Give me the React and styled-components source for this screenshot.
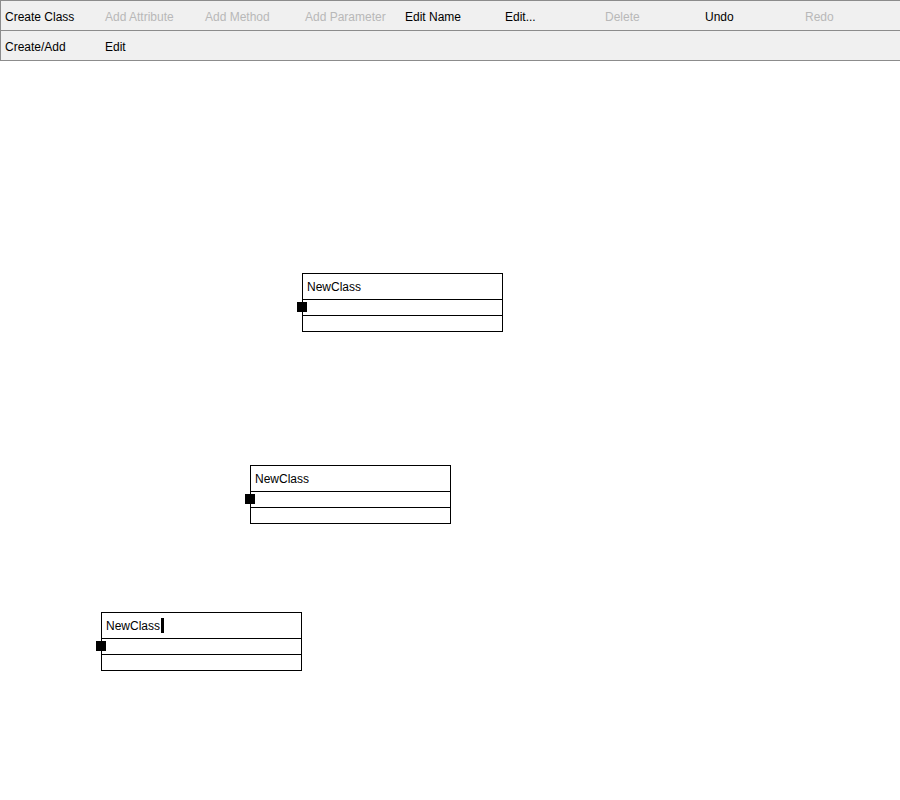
import React from "react";
import styled, { createGlobalStyle } from "styled-components";

const GlobalStyle = createGlobalStyle`
  html, body {
    margin: 0;
    padding: 0;
    background: #ffffff;
  }
  body {
    font-family: "Liberation Sans", Arial, sans-serif;
    font-size: 12px;
  }
`;

const toolbarRows = [
  [
    { label: "Create Class", enabled: true },
    { label: "Add Attribute", enabled: false },
    { label: "Add Method", enabled: false },
    { label: "Add Parameter", enabled: false },
    { label: "Edit Name", enabled: true },
    { label: "Edit...", enabled: true },
    { label: "Delete", enabled: false },
    { label: "Undo", enabled: true },
    { label: "Redo", enabled: false },
  ],
  [
    { label: "Create/Add", enabled: true },
    { label: "Edit", enabled: true },
  ],
];

const classes = [
  { id: 1, name: "NewClass", x: 302, y: 212, editing: false },
  { id: 2, name: "NewClass", x: 250, y: 404, editing: false },
  { id: 3, name: "NewClass", x: 101, y: 551, editing: true },
];

export default function App() {
  return (
    <Page>
      <GlobalStyle />
      <Toolbar>
        {toolbarRows.map((row, i) => (
          <ToolbarRow key={i}>
            {row.map((b) => (
              <ToolButton key={b.label} $disabled={!b.enabled}>
                {b.label}
              </ToolButton>
            ))}
          </ToolbarRow>
        ))}
      </Toolbar>
      <Canvas>
        {classes.map((c) => (
          <ClassBox key={c.id} style={{ left: c.x, top: c.y }}>
            <ClassName>
              {c.name}
              {c.editing && <Caret />}
            </ClassName>
            <Section />
            <Section $last />
            <Handle />
          </ClassBox>
        ))}
      </Canvas>
    </Page>
  );
}

const Page = styled.div`
  width: 900px;
  height: 800px;
  display: flex;
  flex-direction: column;
  background: #ffffff;
`;

const Toolbar = styled.div`
  display: flex;
  flex-direction: column;
  background: #f0f0f0;
  border-top: 1px solid #8c8c8c;
  border-left: 1px solid #8c8c8c;
`;

const ToolbarRow = styled.div`
  display: flex;
  height: 29px;
  border-bottom: 1px solid #8c8c8c;
`;

const ToolButton = styled.div`
  width: 100px;
  flex: none;
  box-sizing: border-box;
  padding: 2px 0 0 4px;
  display: flex;
  align-items: center;
  font-size: 12px;
  color: ${(p) => (p.$disabled ? "#b8b8b8" : "#000000")};
  white-space: nowrap;
`;

const Canvas = styled.div`
  position: relative;
  flex: 1;
  background: #ffffff;
`;

const ClassBox = styled.div`
  position: absolute;
  width: 201px;
  box-sizing: border-box;
  border: 1px solid #000000;
  background: #ffffff;
  display: flex;
  flex-direction: column;
`;

const ClassName = styled.div`
  height: 25px;
  border-bottom: 1px solid #000000;
  padding-left: 4px;
  display: flex;
  align-items: center;
  font-size: 12px;
  color: #000000;
`;

const Caret = styled.span`
  display: inline-block;
  width: 3px;
  height: 15px;
  margin-left: 1px;
  background: #000000;
`;

const Section = styled.div`
  height: 15px;
  border-bottom: ${(p) => (p.$last ? "none" : "1px solid #000000")};
`;

const Handle = styled.div`
  position: absolute;
  left: -6px;
  top: 28px;
  width: 10px;
  height: 10px;
  background: #000000;
`;
